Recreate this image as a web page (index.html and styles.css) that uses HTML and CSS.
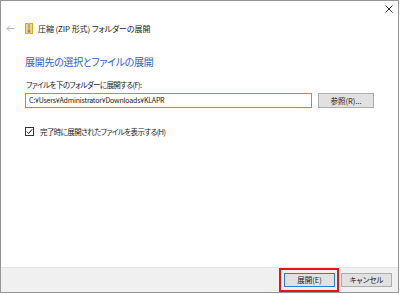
FILE: index.html
```html
<!DOCTYPE html>
<html lang="ja">
<head>
  <meta charset="UTF-8" />
  <title>圧縮 (ZIP 形式) フォルダーの展開</title>
  <link rel="stylesheet" href="styles.css">
</head>
<body>
  <div class="window">
    <div class="caption">
      <svg class="close" width="8" height="8" viewBox="0 0 8 8">
        <path d="M0.5 0.5 L7.5 7.5 M7.5 0.5 L0.5 7.5" stroke="#333" stroke-width="1" fill="none"/>
      </svg>
    </div>
    <div class="nav">
      <svg class="back" width="9" height="7" viewBox="0 0 9 7">
        <path d="M8.5 3.5 H1 M3.8 0.7 L1 3.5 L3.8 6.3" stroke="#b5b5b5" stroke-width="1" fill="none"/>
      </svg>
      <svg class="zip" width="8" height="11" viewBox="0 0 8 11">
        <rect x="0.5" y="0.5" width="7" height="10" fill="#ffd45c" stroke="#d9a62a"/>
        <rect x="3" y="0.5" width="2" height="10" fill="#c9c9c9"/>
        <path d="M3 2 H5 M3 4 H5 M3 6 H5" stroke="#7a7a7a" stroke-width="0.8"/>
        <rect x="2.8" y="7" width="2.4" height="2.6" fill="#8a8a8a"/>
      </svg>
      <span class="title">圧縮 (ZIP 形式) フォルダーの展開</span>
    </div>

    <div class="content">
      <h1>展開先の選択とファイルの展開</h1>
      <p class="label">ファイルを下のフォルダーに展開する(F):</p>
      <div class="path-row">
        <div class="path-input">C:¥Users¥Administrator¥Downloads¥KLAPR</div>
        <button class="btn browse">参照(R)...</button>
      </div>
      <label class="check-row">
        <span class="checkbox">
          <svg width="7" height="7" viewBox="0 0 7 7">
            <path d="M0.8 3.6 L2.7 5.5 L6.2 1.2" stroke="#222" stroke-width="1" fill="none"/>
          </svg>
        </span>
        完了時に展開されたファイルを表示する(H)
      </label>
    </div>

    <div class="footer">
      <div class="ok-wrap">
        <button class="btn primary">展開(E)</button>
        <span class="highlight"></span>
      </div>
      <button class="btn">キャンセル</button>
    </div>
  </div>
</body>
</html>
```

FILE: styles.css
```css
* {
  margin: 0;
  padding: 0;
  box-sizing: border-box;
}

body {
  width: 400px;
  height: 294px;
  background: #fff;
  font-family: "Noto Sans CJK JP", "Noto Sans", sans-serif;
  font-feature-settings: "palt";
  color: #1a1a1a;
  font-size: 8px;
}

.window {
  width: 399px;
  height: 293px;
  border: 1px solid #959595;
  display: flex;
  flex-direction: column;
  background: #fff;
}

.caption {
  height: 16px;
  display: flex;
  justify-content: flex-end;
  padding: 4px 5px 0 0;
}

.nav {
  height: 14px;
  margin-top: 4px;
  display: flex;
  align-items: center;
  padding-left: 5px;
}

.back {
  margin-right: 10px;
}

.zip {
  margin-right: 5px;
}

.title {
  font-size: 8px;
  color: #222;
  letter-spacing: -0.1px;
}

.content {
  flex: 1;
  padding: 20px 0 0 24px;
}

h1 {
  font-size: 10px;
  font-weight: normal;
  line-height: 14px;
  color: #2f62c7;
  letter-spacing: -0.3px;
}

.label {
  margin-top: 10px;
  line-height: 12px;
  font-size: 7.5px;
  letter-spacing: -0.6px;
  padding-left: 1px;
}

.path-row {
  display: flex;
  gap: 6px;
  margin-top: 2px;
}

.path-input {
  width: 287px;
  height: 15px;
  border: 1px solid #5aa0e6;
  padding-left: 3px;
  line-height: 13px;
  font-size: 7px;
  letter-spacing: -0.2px;
}

.btn {
  font-family: inherit;
  font-feature-settings: "palt";
  font-size: 7.5px;
  color: #1a1a1a;
  background: #e1e1e1;
  border: 1px solid #adadad;
  height: 15px;
  line-height: 13px;
}

.browse {
  width: 56px;
}

.check-row {
  display: flex;
  align-items: center;
  gap: 6px;
  margin-top: 18px;
  height: 10px;
  font-size: 7.5px;
  letter-spacing: -0.6px;
}

.checkbox {
  width: 9px;
  height: 9px;
  border: 1px solid #333;
  display: flex;
  align-items: center;
  justify-content: center;
}

.footer {
  height: 25px;
  background: #f0f0f0;
  border-top: 1px solid #e4e4e4;
  display: flex;
  justify-content: flex-end;
  gap: 6px;
  padding: 5px 6px 0 0;
}

.footer .btn {
  width: 51px;
  height: 14px;
  line-height: 12px;
}

.footer .primary {
  border-color: #2a7fd4;
}

.ok-wrap {
  position: relative;
  height: 14px;
}

.highlight {
  position: absolute;
  left: -5px;
  right: -4px;
  top: -5px;
  bottom: -5px;
  border: 2px solid #e8141b;
}
```
